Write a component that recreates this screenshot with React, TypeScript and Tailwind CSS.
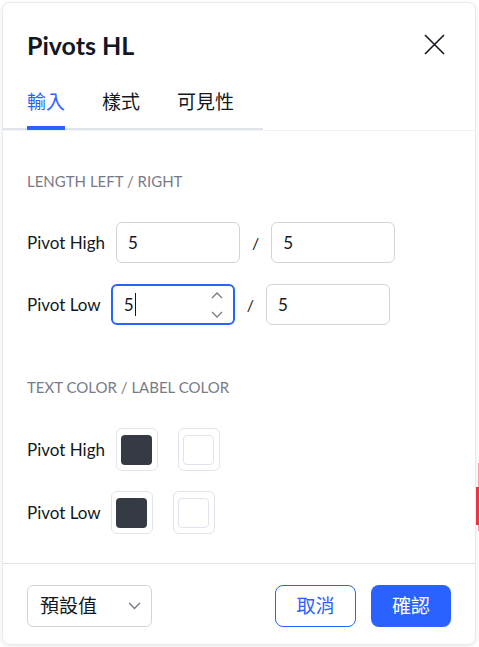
import React from 'react';

const font = { fontFamily: 'Lato, "Noto Sans CJK TC", sans-serif' };

// --- ICONS ---

const CloseIcon = () => (
    <svg width="21" height="21" viewBox="0 0 21 21" fill="none" stroke="#131722" strokeWidth="1.6">
        <path d="M1 1l19 19M20 1L1 20" />
    </svg>
);

const ChevronDown = ({ size = 12 }: { size?: number }) => (
    <svg width={size} height={size / 2 + 1} viewBox="0 0 12 7" fill="none" stroke="#787b86" strokeWidth="1.3">
        <path d="M1 1l5 5 5-5" />
    </svg>
);

const ChevronUp = () => (
    <svg width="12" height="7" viewBox="0 0 12 7" fill="none" stroke="#787b86" strokeWidth="1.3">
        <path d="M1 6l5-5 5 5" />
    </svg>
);

// --- pieces ---

const SectionTitle = ({ children }: { children: React.ReactNode }) => (
    <div className="text-[15px] leading-5 uppercase text-[#787b86] h-5">{children}</div>
);

const Label = ({ children }: { children: React.ReactNode }) => (
    <span className="text-[17px] text-[#131722] leading-6">{children}</span>
);

const NumberBox = ({ value, focused }: { value: string; focused?: boolean }) => (
    <div
        className={`relative w-[124px] h-[41px] rounded-md flex items-center pl-[11px] text-[17px] text-[#131722] ${
            focused ? 'border-2 border-[#2962ff] pl-[10px]' : 'border border-[#d1d4dc]'
        }`}
    >
        <span>{value}</span>
        {focused && <span className="w-px h-[23px] bg-[#131722] ml-px" />}
        {focused && (
            <div className="absolute right-[10px] top-[6px] flex flex-col gap-[12px]">
                <ChevronUp />
                <ChevronDown />
            </div>
        )}
    </div>
);

const Swatch = ({ dark }: { dark?: boolean }) => (
    <div className="w-[42px] h-[43px] rounded-md border border-[#e0e3eb] flex items-center justify-center">
        {dark ? (
            <div className="w-[31px] h-[30px] rounded-[4px] bg-[#363a45]" />
        ) : (
            <div className="w-[31px] h-[30px] rounded-[4px] bg-white border border-[#e0e3eb]" />
        )}
    </div>
);

// --- MAIN APP COMPONENT ---

export default function App() {
    const tabs = ['輸入', '樣式', '可見性'];

    return (
        <div className="relative w-[479px] h-[647px] bg-white overflow-hidden p-[2px]" style={font}>
            {/* chart candle peeking out behind the dialog */}
            <div className="absolute right-0 top-[463px] w-px h-[68px] bg-[#f7a1ac]" />
            <div className="absolute right-0 top-[487px] w-[3px] h-[38px] bg-[#f23645]" />

            <div className="relative w-[474px] h-[643px] bg-white rounded-lg border border-[#e9eaee] shadow-[0_2px_6px_rgba(0,0,0,0.08)] flex flex-col">
                {/* header */}
                <div className="flex items-center justify-between pl-[24px] pr-[30px] pt-[20px] h-[84px] pb-[21px]">
                    <h1 className="text-[25px] font-bold text-[#131722] leading-8">Pivots HL</h1>
                    <CloseIcon />
                </div>

                {/* tabs */}
                <div className="flex w-[260px] border-b-2 border-[#e0e3eb] pl-[24px] pt-[3px] gap-[37px] h-[43px]">
                    {tabs.map((t, i) => (
                        <div key={t} className="relative flex items-start">
                            <span className={`text-[19px] leading-6 ${i === 0 ? 'text-[#2962ff]' : 'text-[#131722]'}`}>{t}</span>
                            {i === 0 && <div className="absolute left-0 right-0 -bottom-[2px] h-[4px] bg-[#2962ff]" />}
                        </div>
                    ))}
                </div>

                {/* content */}
                <div className="flex-1 border-t border-[#f0f3fa] px-[24px] pt-[40px]">
                    <SectionTitle>Length Left / Right</SectionTitle>
                    <div className="mt-[31px] flex flex-col gap-[21px]">
                        <div className="flex items-center">
                            <Label>Pivot High</Label>
                            <div className="ml-[11px]"><NumberBox value="5" /></div>
                            <span className="mx-[12px] text-[16px] text-[#131722]">/</span>
                            <NumberBox value="5" />
                        </div>
                        <div className="flex items-center">
                            <Label>Pivot Low</Label>
                            <div className="ml-[10px]"><NumberBox value="5" focused /></div>
                            <span className="mx-[12px] text-[16px] text-[#131722]">/</span>
                            <NumberBox value="5" />
                        </div>
                    </div>

                    <div className="mt-[52px]">
                        <SectionTitle>Text Color / Label Color</SectionTitle>
                    </div>
                    <div className="mt-[31px] flex flex-col gap-[20px]">
                        <div className="flex items-center">
                            <Label>Pivot High</Label>
                            <div className="ml-[11px] flex gap-[20px]">
                                <Swatch dark />
                                <Swatch />
                            </div>
                        </div>
                        <div className="flex items-center">
                            <Label>Pivot Low</Label>
                            <div className="ml-[10px] flex gap-[20px]">
                                <Swatch dark />
                                <Swatch />
                            </div>
                        </div>
                    </div>
                </div>

                {/* footer */}
                <div className="h-[81px] border-t border-[#e0e3eb] px-[24px] pt-[21px] flex items-start justify-between">
                    <div className="w-[125px] h-[42px] rounded-md border border-[#d1d4dc] flex items-center justify-between pl-[12px] pr-[10px]">
                        <span className="text-[19px] text-[#131722]">預設值</span>
                        <ChevronDown size={13} />
                    </div>
                    <div className="flex gap-[15px]">
                        <button className="w-[81px] h-[42px] rounded-lg border border-[#2962ff] text-[#2962ff] text-[19px] bg-white">
                            取消
                        </button>
                        <button className="w-[80px] h-[42px] rounded-lg bg-[#2962ff] text-white text-[19px]">
                            確認
                        </button>
                    </div>
                </div>
            </div>
        </div>
    );
}
